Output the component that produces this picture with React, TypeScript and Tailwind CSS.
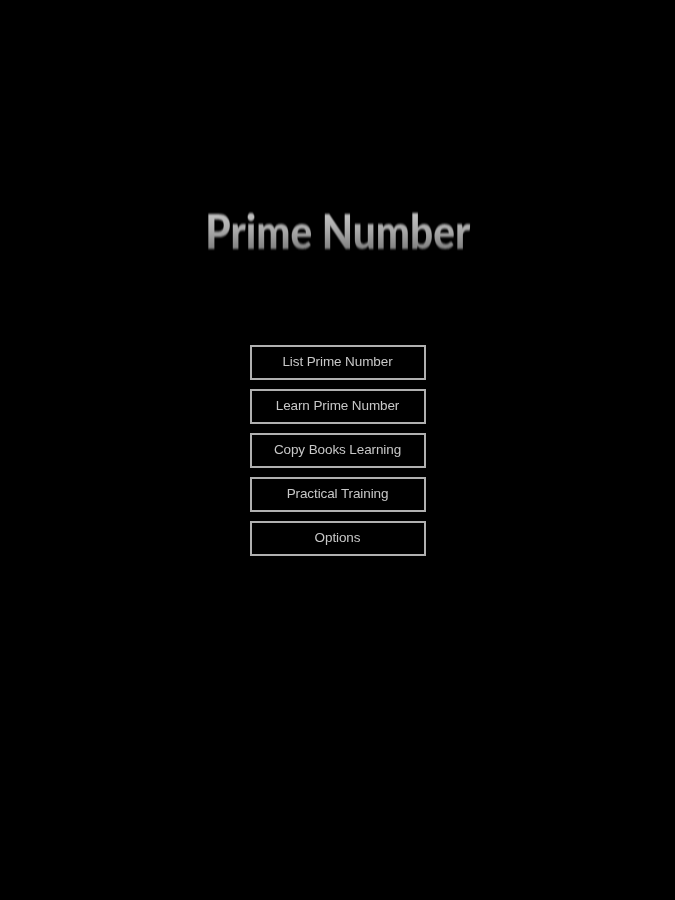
const items = ["List Prime Number", "Learn Prime Number", "Copy Books Learning", "Practical Training", "Options"];

export default function App() {
  return (
    <div className="flex h-[900px] w-[675px] flex-col items-center overflow-hidden bg-black pt-[204px] font-['Liberation_Sans',sans-serif]">
      <h1 className="h-[54px] scale-x-[0.845] whitespace-nowrap bg-gradient-to-b from-[#d0d0d0] via-[#a8a8a8] to-[#6e6e6e] bg-clip-text text-[48px] font-black leading-[54px] text-transparent font-['Lato',sans-serif] blur-[0.8px]">
        Prime Number
      </h1>

      <div className="mt-[87px] flex flex-col gap-[9px]">
        {items.map((item) => (
          <button
            key={item}
            className="flex h-[35px] w-[176px] items-center justify-center border-2 border-[#b0b0b0] bg-black text-[13.5px] tracking-[-0.1px] text-[#c8c8c8] blur-[0.5px]"
          >
            {item}
          </button>
        ))}
      </div>
    </div>
  );
}
